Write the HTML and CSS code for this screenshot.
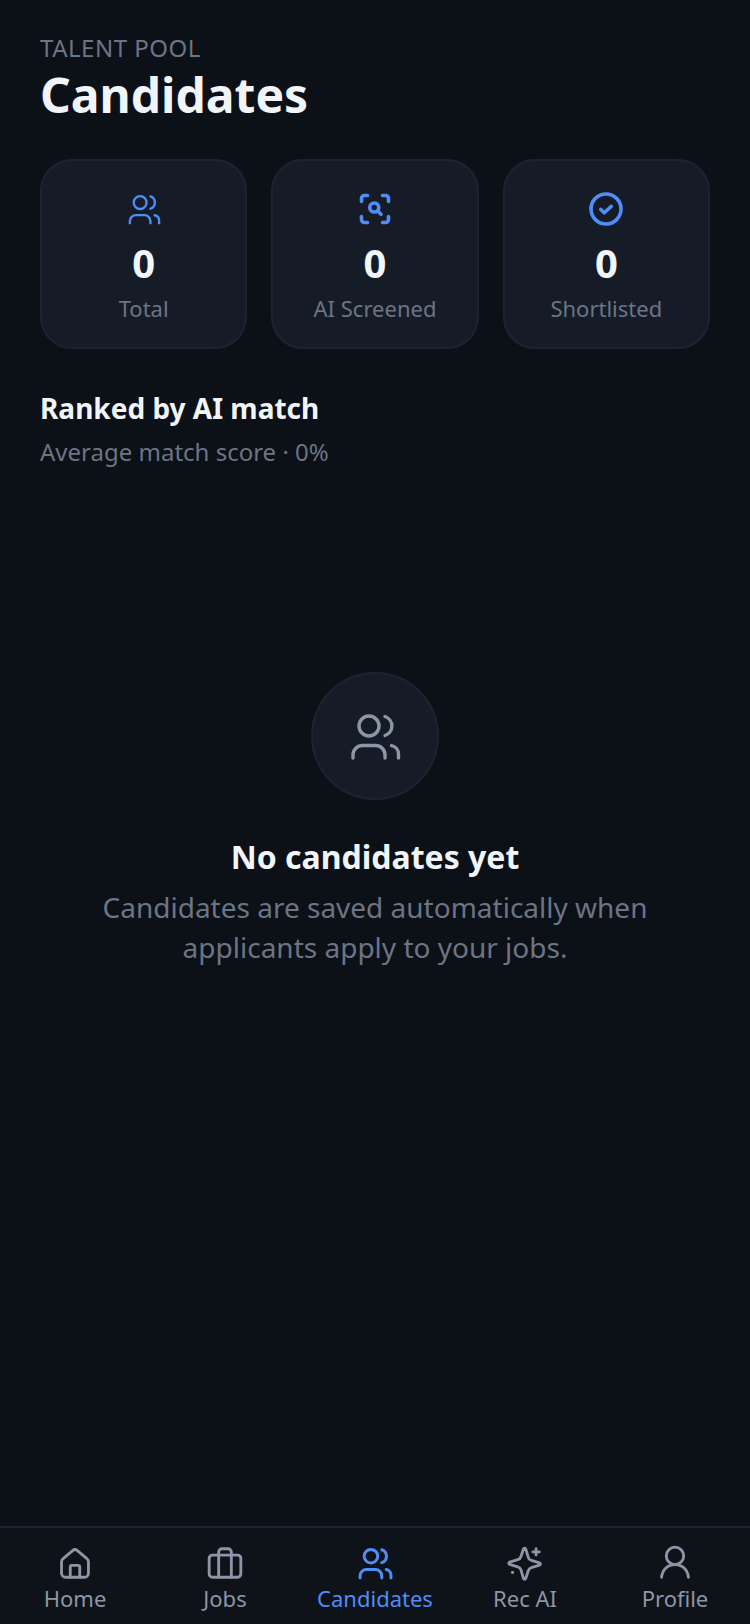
FILE: index.html
```html
<!DOCTYPE html>
<html lang="en">
<head>
<meta charset="utf-8">
<title>Candidates</title>
<link rel="stylesheet" href="styles.css">
</head>
<body>
<svg class="defs" width="0" height="0" aria-hidden="true">
  <symbol id="i-users" viewBox="0 0 56 56">
    <circle cx="22" cy="18" r="10"/>
    <path d="M38 8.5a10 10 0 0 1 0 19"/>
    <path d="M6 50v-3a9.5 9.5 0 0 1 9.5-9.5h13a9.5 9.5 0 0 1 9.5 9.5v3"/>
    <path d="M44.5 37.7a8.5 8.5 0 0 1 7 8.3v4"/>
  </symbol>
  <symbol id="i-scan" viewBox="0 0 24 24">
    <path d="M3 7V5a2 2 0 0 1 2-2h2"/>
    <path d="M17 3h2a2 2 0 0 1 2 2v2"/>
    <path d="M21 17v2a2 2 0 0 1-2 2h-2"/>
    <path d="M7 21H5a2 2 0 0 1-2-2v-2"/>
    <circle cx="11.5" cy="11" r="3"/>
    <path d="m14 13.5 2 2"/>
  </symbol>
  <symbol id="i-check" viewBox="0 0 24 24">
    <circle cx="12" cy="12" r="10"/>
    <path d="m8.5 12.3 2.3 2.2 4.7-4.2"/>
  </symbol>
  <symbol id="i-home" viewBox="0 0 48 48">
    <path d="M9 18.5 21 8.3a4.5 4.5 0 0 1 6 0l12 10.2a5 5 0 0 1 2 4V37a5 5 0 0 1-5 5H12a5 5 0 0 1-5-5V22.500a5 5 0 0 1 2-4Z"/>
    <path d="M18 42V29a2 2 0 0 1 2-2h8a2 2 0 0 1 2 2v13"/>
  </symbol>
  <symbol id="i-jobs" viewBox="0 0 48 48">
    <rect x="4" y="14" width="40" height="28" rx="4"/>
    <path d="M16 42V10a4 4 0 0 1 4-4h8a4 4 0 0 1 4 4v32"/>
  </symbol>
  <symbol id="i-spark" viewBox="0 0 48 48">
    <path d="M22 6.500c.6-1.500 2.500-1.500 3 0l3.100 10.300a6 6 0 0 0 4 4l10.200 3c1.600.5 1.600 2.500 0 3l-10.200 3a6 6 0 0 0-4 4L25 43.500c-.5 1.500-2.400 1.500-3 0l-3.100-10.700a6 6 0 0 0-4-4l-10.300-3c-1.500-.5-1.500-2.500 0-3l10.300-3a6 6 0 0 0 4-4Z"/>
    <path d="M38 6v8M34 10h8"/>
    <path d="M8 36h.5" class="dot"/>
  </symbol>
  <symbol id="i-profile" viewBox="0 0 48 48">
    <circle cx="24" cy="15" r="11"/>
    <path d="M7 42c1-10 8-16 17-16s16 6 17 16"/>
  </symbol>
</svg>

<main class="screen">
  <header class="head">
    <p class="eyebrow">TALENT POOL</p>
    <h1 class="title">Candidates</h1>
  </header>

  <section class="stats">
    <div class="stat">
      <svg class="stat-icon stat-icon-users"><use href="#i-users"/></svg>
      <div class="stat-num">0</div>
      <div class="stat-label">Total</div>
    </div>
    <div class="stat">
      <svg class="stat-icon"><use href="#i-scan"/></svg>
      <div class="stat-num">0</div>
      <div class="stat-label">AI Screened</div>
    </div>
    <div class="stat">
      <svg class="stat-icon"><use href="#i-check"/></svg>
      <div class="stat-num">0</div>
      <div class="stat-label">Shortlisted</div>
    </div>
  </section>

  <section class="rank">
    <h2 class="rank-title">Ranked by AI match</h2>
    <p class="rank-sub">Average match score · 0%</p>
  </section>

  <section class="empty">
    <div class="empty-circle">
      <svg class="empty-icon"><use href="#i-users"/></svg>
    </div>
    <h3 class="empty-title">No candidates yet</h3>
    <p class="empty-text">Candidates are saved automatically when applicants apply to your jobs.</p>
  </section>
</main>

<nav class="tabbar">
  <div class="tabs">
    <div class="tab">
      <svg class="tab-icon"><use href="#i-home"/></svg>
      <span class="tab-label">Home</span>
    </div>
    <div class="tab">
      <svg class="tab-icon"><use href="#i-jobs"/></svg>
      <span class="tab-label">Jobs</span>
    </div>
    <div class="tab tab-active">
      <svg class="tab-icon tab-icon-users"><use href="#i-users"/></svg>
      <span class="tab-label">Candidates</span>
    </div>
    <div class="tab">
      <svg class="tab-icon"><use href="#i-spark"/></svg>
      <span class="tab-label">Rec AI</span>
    </div>
    <div class="tab">
      <svg class="tab-icon"><use href="#i-profile"/></svg>
      <span class="tab-label">Profile</span>
    </div>
  </div>
</nav>
</body>
</html>
```
FILE: styles.css
```css
* { box-sizing: border-box; }
html, body { margin: 0; height: 100%; }
body {
  width: 750px;
  height: 1624px;
  overflow: hidden;
  display: flex;
  flex-direction: column;
  background: #0c1017;
  color: #f1f5f9;
  font-family: "Noto Sans", "Open Sans", sans-serif;
}
p, h1, h2, h3 { margin: 0; }
.defs { position: absolute; }
svg { fill: none; stroke: currentColor; stroke-linecap: round; stroke-linejoin: round; display: block; }

.screen { flex: 1; min-height: 0; display: flex; flex-direction: column; padding: 32px 40px 0; }

.eyebrow { font-size: 24px; line-height: 32px; color: #6b7585; letter-spacing: 0.5px; }
.title { font-size: 48px; line-height: 62px; font-weight: 700; color: #f1f5f9; }

.stats { display: flex; gap: 24px; margin-top: 33px; }
.stat {
  flex: 1;
  height: 190px;
  background: #161c27;
  border: 2px solid #1d2431;
  border-radius: 32px;
  display: flex;
  flex-direction: column;
  align-items: center;
  padding-top: 30px;
}
.stat-icon { width: 36px; height: 36px; color: #4f8ef7; stroke-width: 2.4px; }
.stat-icon-users { stroke-width: 3.7px; }
.stat-num { font-size: 40px; line-height: 54px; font-weight: 700; margin-top: 9px; }
.stat-label { font-size: 22px; line-height: 30px; color: #6b7585; margin-top: 3px; }

.rank { margin-top: 40px; }
.rank-title { font-size: 28px; line-height: 38px; font-weight: 700; }
.rank-sub { font-size: 24px; line-height: 32px; color: #6b7585; margin-top: 9px; }

.empty { display: flex; flex-direction: column; align-items: center; margin-top: 204px; }
.empty-circle {
  width: 128px;
  height: 128px;
  border-radius: 50%;
  background: #161c27;
  border: 2px solid #1d2431;
  display: flex;
  align-items: center;
  justify-content: center;
}
.empty-icon { width: 56px; height: 56px; color: #8d96a6; stroke-width: 3.4px; }
.empty-title { font-size: 32px; line-height: 44px; font-weight: 700; margin-top: 35px; }
.empty-text { font-size: 28px; line-height: 40px; color: #6b7585; text-align: center; margin-top: 8px; width: 580px; }

.tabbar { height: 98px; border-top: 2px solid #1d2431; background: #0e1219; padding-bottom: 11px; }
.tabs { display: flex; height: 100%; overflow: hidden; }
.tab { width: 150px; display: flex; flex-direction: column; align-items: center; padding-top: 16px; color: #8d96a6; }
.tab-active { color: #4f8ef7; }
.tab-icon { width: 48px; height: 48px; stroke-width: 3.6px; }
.tab-icon-users { stroke-width: 4.4px; }
.tab-label { font-size: 22px; line-height: 30px; margin-top: 1px; white-space: nowrap; }
```
